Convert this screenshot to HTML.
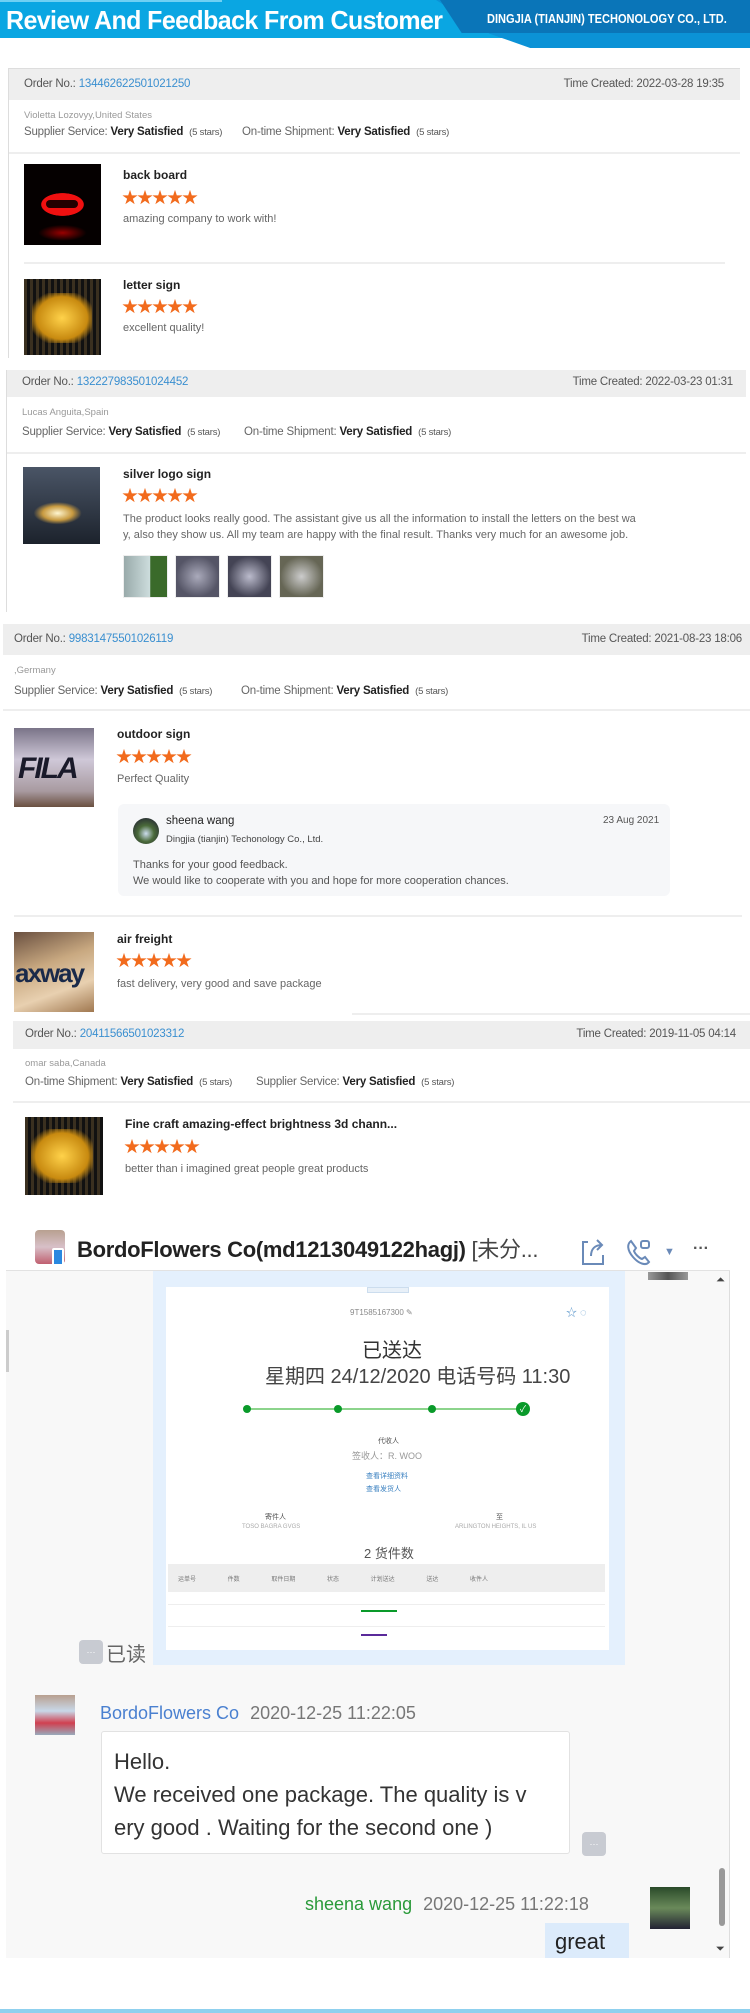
<!DOCTYPE html>
<html><head><meta charset="utf-8"><style>
*{margin:0;padding:0;box-sizing:border-box}
body{width:750px;height:2013px;position:relative;background:#fff;font-family:"Liberation Sans","Noto Sans CJK SC",sans-serif;overflow:hidden;color:#333}
.a{position:absolute;white-space:nowrap}
.hd{position:absolute;background:#eeeeee;height:31px}
.o{font-size:11.5px;color:#555;letter-spacing:-0.2px}
.o b{font-weight:normal;color:#3a8fd0}
.nm{font-size:9.5px;color:#999}
.sv{font-size:11.5px;color:#666;letter-spacing:-0.2px}
.sv b{color:#222;font-weight:bold;font-size:11.5px}
.sv i{font-style:normal;font-size:9.5px;color:#555}
.ln{position:absolute;height:2px;background:#eee}
.t{font-size:12px;font-weight:bold;color:#222}
.st{font-size:16px;color:#f26b1d;letter-spacing:-1px;line-height:16px}
.tx{font-size:11px;color:#666}
.img{position:absolute}
</style></head><body>
<!-- header -->
<div class="a" style="left:0;top:0;width:750px;height:38px;background:#0aa6e2"></div>
<div class="a" style="left:0;top:0;width:222px;height:2px;background:#6fd0f3"></div>
<div class="a" style="left:436px;top:0;width:314px;height:48px;background:#0b92d6;clip-path:polygon(0 0,100% 0,100% 100%,30% 100%,17% 70%)"></div>
<div class="a" style="left:440px;top:0;width:310px;height:33px;background:#0a75b8;clip-path:polygon(0 0,100% 0,100% 100%,7% 100%)"></div>
<div class="a" style="left:6px;top:5px;font-size:26px;font-weight:bold;color:#fff;letter-spacing:-0.6px;transform:scaleX(0.96);transform-origin:left">Review And Feedback From Customer</div>
<div class="a" style="left:487px;top:11px;font-size:13px;font-weight:bold;color:#fff;transform:scaleX(0.85);transform-origin:left">DINGJIA (TIANJIN) TECHONOLOGY CO., LTD.</div>

<!-- card1 -->
<div class="a" style="left:8px;top:68px;width:732px;height:290px;border-left:1px solid #ddd;border-top:1px solid #ddd"></div>
<div class="hd" style="left:9px;top:69px;width:731px"></div>
<div class="a o" style="left:24px;top:78px">Order No.: <b>134462622501021250</b></div>
<div class="a o" style="right:26px;top:78px">Time Created: 2022-03-28 19:35</div>
<div class="a nm" style="left:24px;top:110px">Violetta Lozovyy,United States</div>
<div class="a sv" style="left:24px;top:126px">Supplier Service: <b>Very Satisfied</b> &nbsp;<i>(5 stars)</i></div>
<div class="a sv" style="left:242px;top:126px">On-time Shipment: <b>Very Satisfied</b> &nbsp;<i>(5 stars)</i></div>
<div class="ln" style="left:9px;top:152px;width:731px"></div>
<div class="img" style="left:24px;top:164px;width:77px;height:81px;background:radial-gradient(ellipse 30px 16px at 50% 50%,#f01010 70%,transparent 72%),radial-gradient(ellipse 30px 10px at 50% 85%,#900 0,transparent 80%),#050000"><div style="position:absolute;left:22px;top:36px;width:32px;height:8px;background:#200;border-radius:4px"></div></div>
<div class="a t" style="left:123px;top:168px">back board</div>
<div class="a st" style="left:122px;top:191px">★★★★★</div>
<div class="a tx" style="left:123px;top:213px">amazing company to work with!</div>
<div class="ln" style="left:24px;top:262px;width:701px"></div>
<div class="img" style="left:24px;top:279px;width:77px;height:76px;background:repeating-linear-gradient(90deg,#3a3020 0,#3a3020 3px,#111 3px,#111 6px)"><div style="position:absolute;left:8px;top:14px;width:60px;height:50px;background:radial-gradient(ellipse at 50% 50%,#ffd24a,#c88a10 60%,transparent 80%)"></div></div>
<div class="a t" style="left:123px;top:278px">letter sign</div>
<div class="a st" style="left:122px;top:300px">★★★★★</div>
<div class="a tx" style="left:123px;top:322px">excellent quality!</div>

<!-- card2 -->
<div class="a" style="left:6px;top:370px;width:740px;height:242px;border-left:1px solid #ddd"></div>
<div class="hd" style="left:7px;top:370px;width:739px;height:27px"></div>
<div class="a o" style="left:22px;top:376px">Order No.: <b>132227983501024452</b></div>
<div class="a o" style="right:17px;top:376px">Time Created: 2022-03-23 01:31</div>
<div class="a nm" style="left:22px;top:407px">Lucas Anguita,Spain</div>
<div class="a sv" style="left:22px;top:426px">Supplier Service: <b>Very Satisfied</b> &nbsp;<i>(5 stars)</i></div>
<div class="a sv" style="left:244px;top:426px">On-time Shipment: <b>Very Satisfied</b> &nbsp;<i>(5 stars)</i></div>
<div class="ln" style="left:7px;top:452px;width:739px"></div>
<div class="img" style="left:23px;top:467px;width:77px;height:77px;background:radial-gradient(ellipse 30px 14px at 45% 60%,#fff6d0,#c89a40 50%,transparent 80%),linear-gradient(#4a5566,#1c222c)"></div>
<div class="a t" style="left:123px;top:467px">silver logo sign</div>
<div class="a st" style="left:122px;top:489px">★★★★★</div>
<div class="a tx" style="left:123px;top:511px;line-height:16px">The product looks really good. The assistant give us all the information to install the letters on the best wa<br>y, also they show us. All my team are happy with the final result. Thanks very much for an awesome job.</div>
<div class="img" style="left:123px;top:555px;width:45px;height:43px;border:1px solid #eee;background:linear-gradient(90deg,#9aa 0,#cdd 60%,#3a6a2a 62%)"></div>
<div class="img" style="left:175px;top:555px;width:45px;height:43px;border:1px solid #eee;background:radial-gradient(#aab 0,#556 70%)"></div>
<div class="img" style="left:227px;top:555px;width:45px;height:43px;border:1px solid #eee;background:radial-gradient(#bbc 0,#445 70%)"></div>
<div class="img" style="left:279px;top:555px;width:45px;height:43px;border:1px solid #eee;background:radial-gradient(#ccc 0,#665 70%)"></div>

<!-- card3 -->
<div class="hd" style="left:3px;top:624px;width:747px"></div>
<div class="a o" style="left:14px;top:633px">Order No.: <b>99831475501026119</b></div>
<div class="a o" style="right:8px;top:633px">Time Created: 2021-08-23 18:06</div>
<div class="a nm" style="left:14px;top:665px">,Germany</div>
<div class="a sv" style="left:14px;top:685px">Supplier Service: <b>Very Satisfied</b> &nbsp;<i>(5 stars)</i></div>
<div class="a sv" style="left:241px;top:685px">On-time Shipment: <b>Very Satisfied</b> &nbsp;<i>(5 stars)</i></div>
<div class="ln" style="left:3px;top:709px;width:747px"></div>
<div class="img" style="left:14px;top:728px;width:80px;height:79px;background:linear-gradient(#7a7488,#cfc8d8 40%,#a89aa0 80%,#6a5040)"><div style="position:absolute;left:4px;top:24px;font-size:30px;font-weight:bold;font-style:italic;color:#1a1a2a;letter-spacing:-2px">FILA</div></div>
<div class="a t" style="left:117px;top:727px">outdoor sign</div>
<div class="a st" style="left:116px;top:750px">★★★★★</div>
<div class="a tx" style="left:117px;top:773px">Perfect Quality</div>
<div class="a" style="left:118px;top:804px;width:552px;height:92px;background:#f6f7f9;border-radius:6px"></div>
<div class="a" style="left:133px;top:818px;width:26px;height:26px;border-radius:50%;background:radial-gradient(circle at 50% 60%,#cde 0,#4a6a3a 40%,#223 90%)"></div>
<div class="a" style="left:166px;top:815px;font-size:11.5px;color:#222">sheena wang</div>
<div class="a" style="left:166px;top:834px;font-size:9.5px;color:#444">Dingjia (tianjin) Techonology Co., Ltd.</div>
<div class="a" style="left:603px;top:815px;font-size:10px;color:#555">23 Aug 2021</div>
<div class="a tx" style="left:133px;top:857px;line-height:16px;color:#555">Thanks for your good feedback.<br>We would like to cooperate with you and hope for more cooperation chances.</div>
<div class="ln" style="left:14px;top:915px;width:728px"></div>
<div class="img" style="left:14px;top:932px;width:80px;height:80px;background:linear-gradient(160deg,#6a5040,#c8a880 40%,#e8d0b0 70%,#a07850)"><div style="position:absolute;left:1px;top:26px;font-size:26px;font-weight:bold;color:#1a2a4a;letter-spacing:-2px">axway</div></div>
<div class="a t" style="left:117px;top:932px">air freight</div>
<div class="a st" style="left:116px;top:954px">★★★★★</div>
<div class="a tx" style="left:117px;top:978px">fast delivery, very good and save package</div>
<div class="a" style="left:352px;top:1013px;width:398px;height:2px;background:#eee"></div>

<!-- card4 -->
<div class="hd" style="left:13px;top:1021px;width:737px;height:28px"></div>
<div class="a o" style="left:25px;top:1028px">Order No.: <b>20411566501023312</b></div>
<div class="a o" style="right:14px;top:1028px">Time Created: 2019-11-05 04:14</div>
<div class="a nm" style="left:25px;top:1058px">omar saba,Canada</div>
<div class="a sv" style="left:25px;top:1076px">On-time Shipment: <b>Very Satisfied</b> &nbsp;<i>(5 stars)</i></div>
<div class="a sv" style="left:256px;top:1076px">Supplier Service: <b>Very Satisfied</b> &nbsp;<i>(5 stars)</i></div>
<div class="ln" style="left:13px;top:1101px;width:737px"></div>
<div class="img" style="left:25px;top:1117px;width:78px;height:78px;background:repeating-linear-gradient(90deg,#3a3020 0,#3a3020 3px,#111 3px,#111 6px)"><div style="position:absolute;left:6px;top:12px;width:62px;height:54px;background:radial-gradient(ellipse at 50% 50%,#ffd24a,#c88a10 60%,transparent 80%)"></div></div>
<div class="a t" style="left:125px;top:1117px">Fine craft amazing-effect brightness 3d chann...</div>
<div class="a st" style="left:124px;top:1140px">★★★★★</div>
<div class="a tx" style="left:125px;top:1163px">better than i imagined great people great products</div>

<!-- chat -->
<div class="a" style="left:6px;top:1226px;width:724px;height:732px;background:#f8f8f8;border-right:1px solid #ddd"></div>
<div class="a" style="left:6px;top:1226px;width:724px;height:45px;background:#fff;border-bottom:1px solid #e2e2e2"></div>
<div class="a" style="left:35px;top:1230px;width:30px;height:34px;border-radius:4px;background:linear-gradient(#b8a090,#d8c0c8 50%,#c06070)"></div>
<div class="a" style="left:52px;top:1248px;width:12px;height:18px;border-radius:2px;background:#2a88e0;border:2px solid #fff"></div>
<div class="a" style="left:77px;top:1232px;font-size:22px;font-weight:bold;color:#222;letter-spacing:-0.3px">BordoFlowers Co(md1213049122hagj) <span style="font-weight:normal;color:#444">[未分...</span></div>
<svg class="a" style="left:580px;top:1238px" width="26" height="28" viewBox="0 0 26 28"><path d="M8 4H3v22h20v-9" fill="none" stroke="#6a8ab8" stroke-width="2"/><path d="M11 18c0-7 4-11 11-11M17 2l5 5-5 5" fill="none" stroke="#6a8ab8" stroke-width="2"/></svg>
<svg class="a" style="left:625px;top:1238px" width="28" height="28" viewBox="0 0 28 28"><path d="M6 3c-4 3-4 9 2 16s13 9 16 5l-4-5-3 2c-3-1-7-5-8-8l2-3z" fill="none" stroke="#6a8ab8" stroke-width="2"/><rect x="16" y="3" width="8" height="7" rx="2" fill="none" stroke="#6a8ab8" stroke-width="2"/></svg>
<div class="a" style="left:664px;top:1246px;font-size:11px;color:#6a8ab8">▼</div>
<div class="a" style="left:693px;top:1240px;font-size:16px;color:#555;font-weight:bold">···</div>
<div class="a" style="left:6px;top:1330px;width:3px;height:42px;background:#ccc"></div>
<div class="a" style="left:648px;top:1272px;width:40px;height:8px;background:linear-gradient(90deg,#999,#555 50%,#999)"></div>
<div class="a" style="left:716px;top:1274px;font-size:11px;color:#444">⏶</div>
<!-- image bubble -->
<div class="a" style="left:153px;top:1271px;width:472px;height:394px;background:#e4f0fd"></div>
<div class="a" style="left:166px;top:1287px;width:443px;height:363px;background:#fff"></div>
<div class="a" style="left:367px;top:1287px;width:42px;height:6px;border:1px solid #cde;background:#e8f0f8"></div>
<div class="a" style="left:350px;top:1308px;font-size:8px;color:#888">9T1585167300 ✎</div>
<div class="a" style="left:566px;top:1304px;font-size:11px;color:#6aa0d0">☆ ◌</div>
<div class="a" style="left:362px;top:1334px;font-size:20px;color:#333">已送达</div>
<div class="a" style="left:265px;top:1360px;font-size:20px;color:#444">星期四 24/12/2020 电话号码 11:30</div>
<div class="a" style="left:247px;top:1408px;width:276px;height:2px;background:#8cd48c"></div>
<div class="a" style="left:243px;top:1405px;width:8px;height:8px;border-radius:50%;background:#0a9a2a"></div>
<div class="a" style="left:334px;top:1405px;width:8px;height:8px;border-radius:50%;background:#0a9a2a"></div>
<div class="a" style="left:428px;top:1405px;width:8px;height:8px;border-radius:50%;background:#0a9a2a"></div>
<div class="a" style="left:516px;top:1402px;width:14px;height:14px;border-radius:50%;background:#0a9a2a;color:#fff;font-size:9px;text-align:center;line-height:14px">✓</div>
<div class="a" style="left:378px;top:1436px;font-size:7px;color:#555">代收人</div>
<div class="a" style="left:352px;top:1449px;font-size:9px;color:#999">签收人：R. WOO</div>
<div class="a" style="left:366px;top:1470px;font-size:7px;color:#3a80c0;line-height:13px">查看详细资料<br>查看发货人</div>
<div class="a" style="left:265px;top:1512px;font-size:7px;color:#555">寄件人</div>
<div class="a" style="left:242px;top:1524px;font-size:6px;color:#aaa">TOSO BAGRA GVGS</div>
<div class="a" style="left:496px;top:1512px;font-size:7px;color:#555">至</div>
<div class="a" style="left:455px;top:1524px;font-size:6px;color:#aaa">ARLINGTON HEIGHTS, IL US</div>
<div class="a" style="left:364px;top:1543px;font-size:13px;color:#555">2 货件数</div>
<div class="a" style="left:168px;top:1564px;width:437px;height:28px;background:#eeeeee"></div>
<div class="a" style="left:168px;top:1604px;width:437px;height:1px;background:#eee"></div>
<div class="a" style="left:168px;top:1626px;width:437px;height:1px;background:#eee"></div>
<div class="a" style="left:361px;top:1610px;width:36px;height:2px;background:#0a9a2a"></div>
<div class="a" style="left:361px;top:1634px;width:26px;height:2px;background:#5a2a9a"></div>
<div class="a" style="left:178px;top:1574px;font-size:6px;color:#777;word-spacing:30px">运单号 件数 取件日期 状态 计划送达 送达 收件人</div>
<!-- read -->
<div class="a" style="left:79px;top:1640px;width:24px;height:24px;border-radius:4px;background:#c8cbd2;color:#fff;font-size:9px;text-align:center;line-height:24px">···</div>
<div class="a" style="left:106px;top:1638px;font-size:20px;color:#666">已读</div>
<!-- message -->
<div class="a" style="left:35px;top:1695px;width:40px;height:40px;background:linear-gradient(#b8a090,#c8d8e8 40%,#d04050 70%,#9ab)"></div>
<div class="a" style="left:100px;top:1703px;font-size:18px;color:#4a80d0">BordoFlowers Co <span style="color:#777;margin-left:6px">2020-12-25 11:22:05</span></div>
<div class="a" style="left:101px;top:1731px;width:469px;height:123px;background:#fff;border:1px solid #e2e2e2;border-radius:3px"></div>
<div class="a" style="left:114px;top:1745px;font-size:22px;color:#333;line-height:33px">Hello.<br>We received one package. The quality is v<br>ery good . Waiting for the second one )</div>
<div class="a" style="left:582px;top:1832px;width:24px;height:24px;border-radius:4px;background:#c8cbd2;color:#fff;font-size:9px;text-align:center;line-height:24px">···</div>
<div class="a" style="left:305px;top:1894px;font-size:18px;color:#2a9a3a">sheena wang <span style="color:#777;margin-left:6px">2020-12-25 11:22:18</span></div>
<div class="a" style="left:650px;top:1887px;width:40px;height:42px;background:linear-gradient(#2a4a2a,#6a8a5a 50%,#223)"></div>
<div class="a" style="left:545px;top:1923px;width:84px;height:35px;background:#dcebfb;overflow:hidden"><div style="position:absolute;left:10px;top:6px;font-size:22px;color:#222">great</div></div>
<div class="a" style="left:719px;top:1868px;width:6px;height:58px;border-radius:3px;background:#999"></div>
<div class="a" style="left:716px;top:1943px;font-size:11px;color:#444">⏷</div>
<div class="a" style="left:0;top:2009px;width:750px;height:4px;background:#8fd0ee"></div>
</body></html>
